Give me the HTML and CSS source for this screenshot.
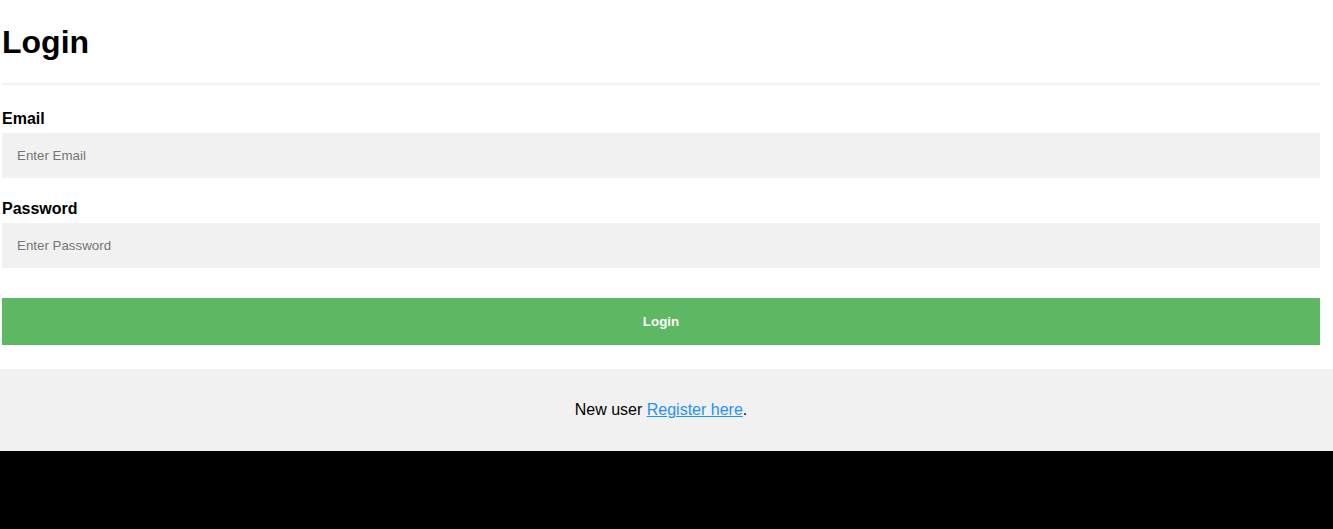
FILE: index.html
```html
<!DOCTYPE html>
<html>
<head>
<meta charset="utf-8">
<title>Login</title>
<link rel="stylesheet" href="styles.css">
</head>
<body>
<form class="login-form">
  <div class="container">
    <h1 class="title">Login</h1>
    <hr class="divider">
    <label class="field-label" for="email">Email</label>
    <input class="field-input" type="text" id="email" placeholder="Enter Email">
    <label class="field-label" for="psw">Password</label>
    <input class="field-input" type="password" id="psw" placeholder="Enter Password">
    <button class="login-btn" type="button">Login</button>
  </div>
  <div class="signin">
    <p class="signin-text">New user <a class="signin-link" href="#">Register here</a>.</p>
  </div>
</form>
</body>
</html>
```
FILE: styles.css
```css
html, body {
  margin: 0;
  padding: 0;
}
body {
  background: #000;
  font-family: "Liberation Sans", Arial, sans-serif;
  font-size: 16px;
  color: #000;
}
.login-form {
  background: #fff;
  margin: 0;
}
.container {
  padding: 24px 13px 16px 2px;
}
.title {
  margin: 0 0 22px;
  font-size: 32px;
  line-height: 37px;
  font-weight: bold;
}
.divider {
  margin: 0 0 25px;
  border: 0;
  border-top: 2px solid #f1f1f1;
  height: 0;
}
.field-label {
  display: block;
  font-weight: bold;
  font-size: 16px;
  line-height: 18px;
}
.field-input {
  display: block;
  box-sizing: border-box;
  width: 100%;
  height: 45px;
  padding: 15px;
  margin: 5px 0 22px;
  border: none;
  background: #f1f1f1;
  font-family: "Liberation Sans", Arial, sans-serif;
  font-size: 13.33px;
  color: #000;
  outline: none;
}
.field-input::placeholder {
  color: #757575;
}
.login-btn {
  display: block;
  box-sizing: border-box;
  width: 100%;
  height: 47px;
  margin: 30px 0 8px;
  padding: 16px 20px;
  border: none;
  background: rgb(94, 183, 98);
  color: #fff;
  font-family: "Liberation Sans", Arial, sans-serif;
  font-size: 13.33px;
  font-weight: bold;
  cursor: pointer;
}
.signin {
  background: #f1f1f1;
  padding: 16px 13px 16px 2px;
  text-align: center;
}
.signin-text {
  margin: 16px 0;
  line-height: 18px;
}
.signin-link {
  color: dodgerblue;
}
```
